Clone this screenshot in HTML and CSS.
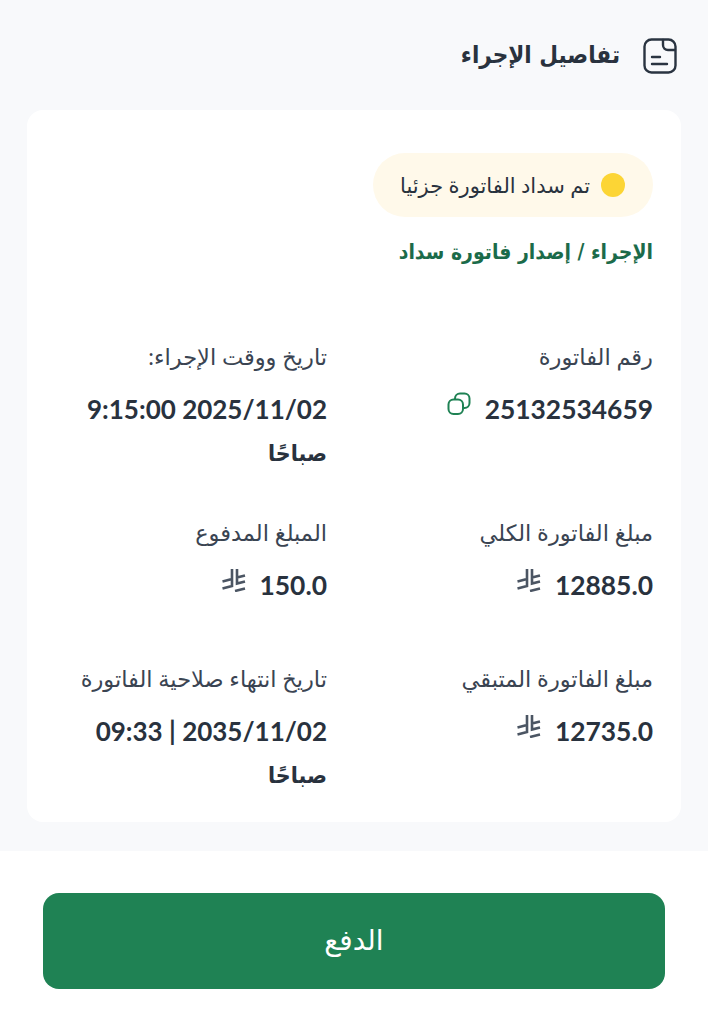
FILE: index.html
```html
<!DOCTYPE html>
<html lang="ar" dir="rtl">
<head>
<meta charset="utf-8">
<title>تفاصيل الإجراء</title>
<link rel="stylesheet" href="styles.css">
</head>
<body>
<main class="content">
  <header class="head">
    <svg class="doc-icon" viewBox="0 0 34 36" fill="none" stroke="#2a3441" stroke-width="2.4" stroke-linecap="round" stroke-linejoin="round">
      <rect x="1.5" y="1.5" width="31" height="33" rx="7"/>
      <path d="M20 2v5a5 5 0 0 0 5 5h7"/>
      <path d="M9 19h8M9 26h15"/>
    </svg>
    <h1 class="title">تفاصيل الإجراء</h1>
  </header>
  <section class="card">
    <div class="status"><span class="dot"></span><span>تم سداد الفاتورة جزئيا</span></div>
    <h2 class="action">الإجراء / إصدار فاتورة سداد</h2>
    <div class="grid">
      <div class="item">
        <div class="label">رقم الفاتورة</div>
        <div class="value"><span dir="ltr">25132534659</span>
          <svg class="copy" viewBox="0 0 24 24" fill="none" stroke="#1f8254" stroke-width="2"><rect x="1.5" y="7.5" width="14.5" height="14.5" rx="5"/><path d="M8 7.5V6.5a5 5 0 0 1 5-5h4.500a5 5 0 0 1 5 5V11a5 5 0 0 1-5 5H16"/></svg>
        </div>
      </div>
      <div class="item">
        <div class="label">تاريخ ووقت الإجراء:</div>
        <div class="value wrap">2025/11/02 9:15:00 <span class="ampm">صباحًا</span></div>
      </div>
      <div class="item">
        <div class="label">مبلغ الفاتورة الكلي</div>
        <div class="value money"><span dir="ltr">12885.0</span>
          <svg class="riyal" viewBox="0 0 24 24" fill="none" stroke="#4b5563" stroke-width="2.600"><path d="M10 1v17L.5 20.500M15 1v14.500l8-2M.5 13.500L10 11M15 9.500l8-2M13 23l10-2.500"/></svg>
        </div>
      </div>
      <div class="item">
        <div class="label">المبلغ المدفوع</div>
        <div class="value money"><span dir="ltr">150.0</span>
          <svg class="riyal" viewBox="0 0 24 24" fill="none" stroke="#4b5563" stroke-width="2.600"><path d="M10 1v17L.5 20.500M15 1v14.500l8-2M.5 13.500L10 11M15 9.500l8-2M13 23l10-2.500"/></svg>
        </div>
      </div>
      <div class="item">
        <div class="label">مبلغ الفاتورة المتبقي</div>
        <div class="value money"><span dir="ltr">12735.0</span>
          <svg class="riyal" viewBox="0 0 24 24" fill="none" stroke="#4b5563" stroke-width="2.600"><path d="M10 1v17L.5 20.500M15 1v14.500l8-2M.5 13.500L10 11M15 9.500l8-2M13 23l10-2.500"/></svg>
        </div>
      </div>
      <div class="item">
        <div class="label">تاريخ انتهاء صلاحية الفاتورة</div>
        <div class="value wrap">2035/11/02 | 09:33 <span class="ampm">صباحًا</span></div>
      </div>
    </div>
  </section>
</main>
<footer class="foot">
  <button class="pay" type="button">الدفع</button>
</footer>
</body>
</html>
```
FILE: styles.css
```css
* { box-sizing: border-box; }
html, body { margin: 0; padding: 0; }
body {
  width: 708px;
  height: 1024px;
  overflow: hidden;
  background: #fff;
  font-family: "Lato", "DejaVu Sans", sans-serif;
  color: #29323e;
}
.content {
  height: 851px;
  background: #f8f9fb;
  padding: 37px 27px 0;
}
.head {
  display: flex;
  align-items: center;
  gap: 23px;
  height: 37px;
  padding-right: 4px;
}
.doc-icon { width: 34px; height: 36px; flex: none; }
.title {
  margin: 0;
  font-family: "DejaVu Sans Condensed", "DejaVu Sans", sans-serif;
  font-size: 24px;
  font-weight: 700;
  line-height: 37px;
}
.card {
  margin-top: 36px;
  height: 712px;
  background: #fff;
  border-radius: 16px;
  padding: 43px 28px 0;
}
.status {
  display: inline-flex;
  align-items: center;
  gap: 11px;
  height: 64px;
  padding: 0 28px 0 27px;
  border-radius: 32px;
  background: #fff9ea;
  font-size: 21px;
}
.dot { width: 24px; height: 24px; border-radius: 50%; background: #fcd535; flex: none; }
.action {
  margin: 14px 0 0;
  font-family: "DejaVu Sans Condensed", "DejaVu Sans", sans-serif;
  font-size: 21px;
  line-height: 42px;
  font-weight: 700;
  color: #1b6b4a;
}
.grid {
  margin-top: 67px;
  display: grid;
  grid-template-columns: 272px 272px;
  column-gap: 54px;
  align-items: start;
}
.item:nth-child(n+3) { margin-top: 41px; }
.label { font-size: 22.5px; line-height: 34px; color: #3a4452; }
.value {
  margin-top: 13px;
  display: flex;
  align-items: center;
  gap: 14px;
  font-size: 26.4px;
  font-weight: 700;
  line-height: 44px;
}
.value.wrap { display: block; font-size: 26px; }
.value.money { margin-bottom: 14px; }
.ampm {
  display: block;
  font-family: "DejaVu Sans Condensed", "DejaVu Sans", sans-serif;
  font-size: 23px;
}
.copy { width: 24px; height: 24px; flex: none; margin-top: -10px; }
.riyal { width: 24px; height: 24px; flex: none; margin-top: -10px; }
.foot { height: 173px; padding: 42px 43px 0; }
.pay {
  display: block;
  width: 100%;
  height: 96px;
  border: 0;
  border-radius: 16px;
  padding: 0 0 4px;
  background: #1f8254;
  color: #fff;
  font-family: inherit;
  font-size: 28px;
}
```
